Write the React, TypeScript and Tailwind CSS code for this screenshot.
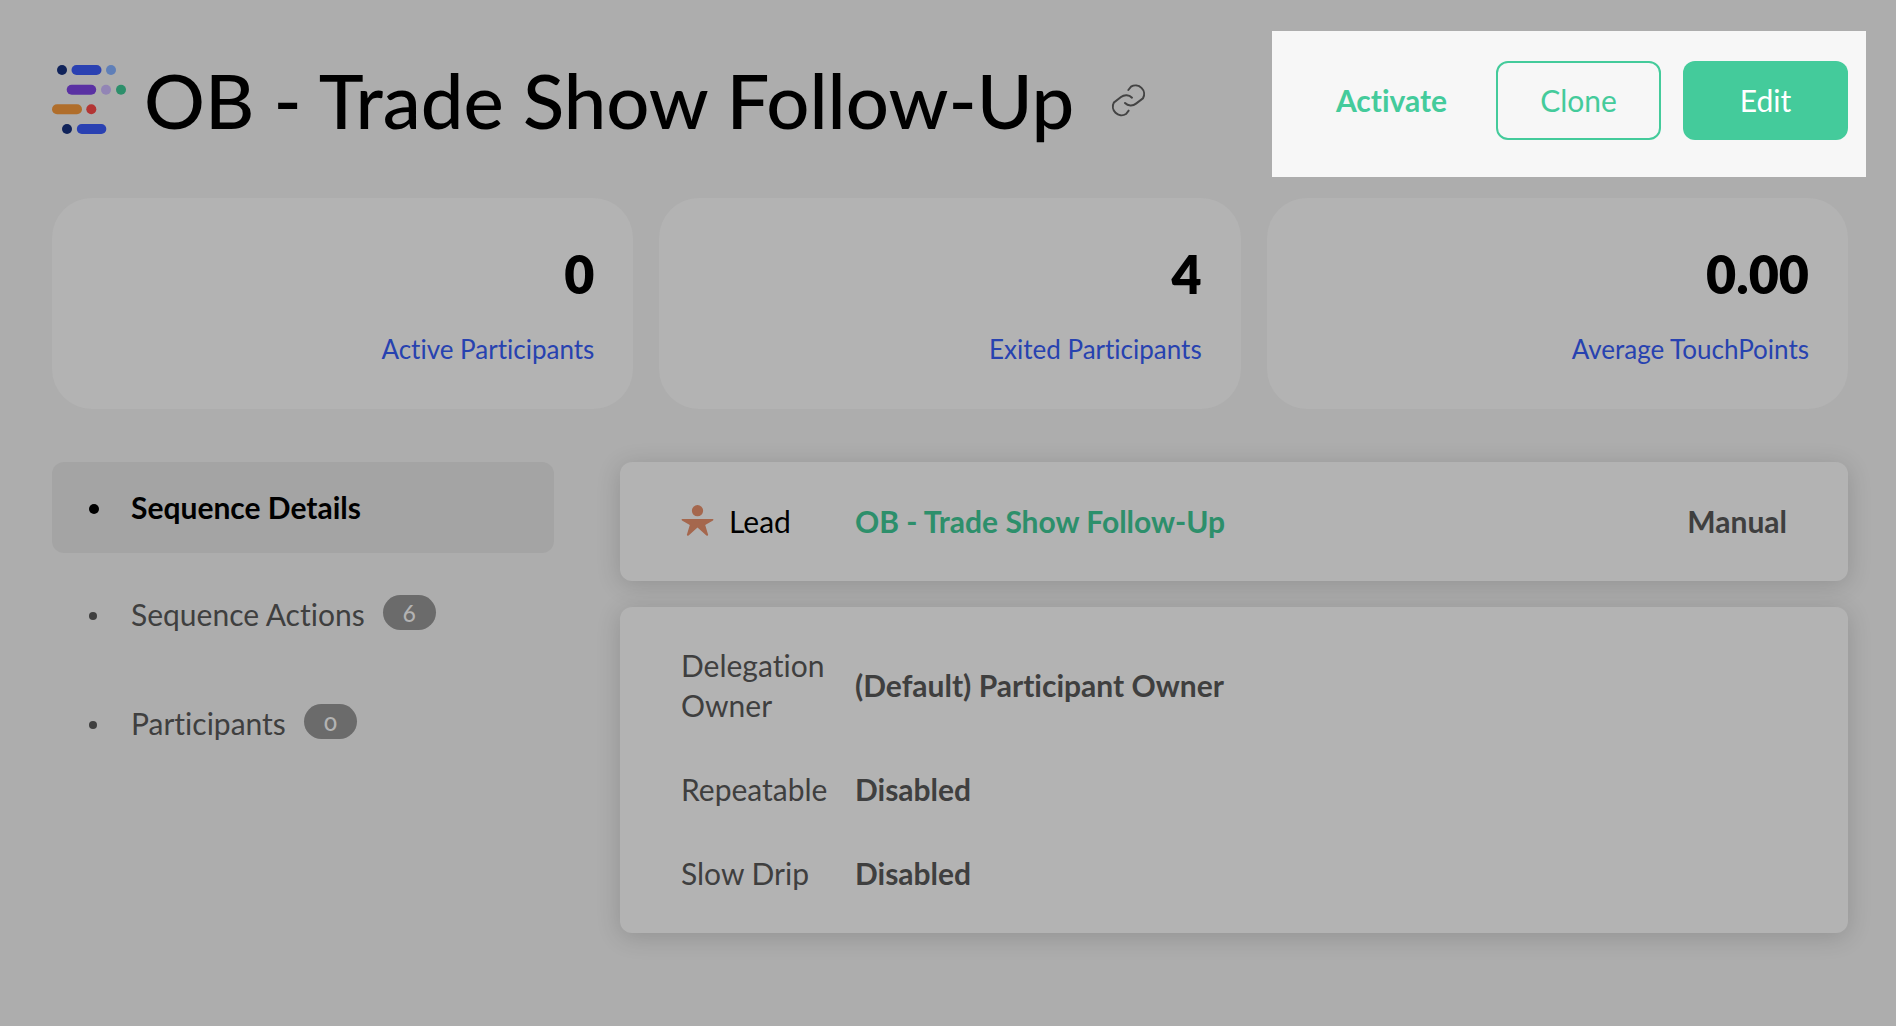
import React from 'react';

const stats = [
  { value: '0', label: 'Active Participants' },
  { value: '4', label: 'Exited Participants' },
  { value: '0.00', label: 'Average TouchPoints' },
];

const navItems = [
  { label: 'Sequence Details', active: true },
  { label: 'Sequence Actions', count: 6 },
  { label: 'Participants', count: 0 },
];

const settings = [
  { label: 'Delegation Owner', value: '(Default) Participant Owner' },
  { label: 'Repeatable', value: 'Disabled' },
  { label: 'Slow Drip', value: 'Disabled' },
];

const SequenceLogo = () => (
  <svg width="74" height="70" viewBox="0 0 74 70" aria-hidden="true">
    <circle cx="10" cy="5" r="5" fill="#10235a" />
    <rect x="19.5" y="0" width="30" height="10" rx="5" fill="#2a41b2" />
    <circle cx="59" cy="5" r="5" fill="#5f7fb8" />
    <rect x="14.7" y="19.7" width="29.5" height="10" rx="5" fill="#5a31a3" />
    <circle cx="54" cy="24.7" r="5" fill="#9285b5" />
    <circle cx="69" cy="24.7" r="5" fill="#2d8f6b" />
    <rect x="0" y="39.3" width="30" height="10" rx="5" fill="#b06e2b" />
    <circle cx="39.3" cy="44.3" r="5" fill="#b33534" />
    <circle cx="15" cy="64" r="5" fill="#10235a" />
    <rect x="24.8" y="59" width="29.5" height="10" rx="5" fill="#2a41b2" />
  </svg>
);

const ChainIcon = () => (
  <svg width="37" height="37" viewBox="212 95 111 111" fill="none" stroke="#434343" strokeWidth="6" strokeLinecap="round" aria-hidden="true">
    <path d="M267 119 L275 109 A26 26 0 0 1 311 144 L290 160 A25 25 0 0 1 257 158" />
    <path d="M268 181 L260 191 A26 26 0 0 1 224 156 L245 140 A25 25 0 0 1 278 142" />
  </svg>
);

const LeadIcon = () => (
  <svg width="33" height="32" viewBox="0 0 33 32" fill="#a5674d" aria-hidden="true">
    <circle cx="16.5" cy="5.7" r="5.6" />
    <path d="M1 14 H32 Q33 14.6 32 15.4 L24.2 20 L27.2 30 Q26.6 31.4 25.4 30.4 L16.5 22.4 L7.6 30.4 Q6.4 31.4 5.8 30 L8.8 20 L1 15.4 Q0 14.6 1 14 Z" />
  </svg>
);

export default function App() {
  return (
    <div className="min-h-screen bg-[#adadad] pl-[52px] pr-12 pb-12 pt-[31px] font-['Lato',sans-serif] text-[30px] leading-10 text-[#3f3f3f] [font-variant-ligatures:no-common-ligatures]">
      <header className="-mr-[18px] flex items-start justify-between">
        <div className="flex items-center pt-[23px]">
          <SequenceLogo />
          <h1 className="ml-[18px] text-[76px] leading-[92px] font-medium text-black">OB - Trade Show Follow-Up</h1>
          <button type="button" aria-label="Copy link" className="ml-9">
            <ChainIcon />
          </button>
        </div>
        <div className="flex gap-[22px] bg-[#f7f7f7] pt-[30px] pr-[18px] pb-[37px] pl-[37px] text-[#44cb9b]">
          <button type="button" className="h-[79px] w-[165px] pb-0.5 font-bold">Activate</button>
          <button type="button" className="h-[79px] w-[165px] rounded-xl border-2 border-[#44cb9b] pb-0.5">Clone</button>
          <button type="button" className="h-[79px] w-[165px] rounded-xl bg-[#44cb9b] pb-0.5 text-white">Edit</button>
        </div>
      </header>

      <section className="mt-[21px] grid grid-cols-3 gap-[26px]">
        {stats.map((stat) => (
          <div key={stat.label} className="rounded-[40px] bg-[#b3b3b3] px-[39px] pt-11 pb-10 text-right">
            <p className="text-[52px] leading-[64px] font-extrabold text-black">{stat.value}</p>
            <p className="mt-[23px] text-[26px] text-[#2742b0]">{stat.label}</p>
          </div>
        ))}
      </section>

      <div className="mt-[53px] flex items-start gap-[66px]">
        <nav className="w-[502px] shrink-0">
          <ul className="flex flex-col gap-[18px]">
            {navItems.map((item) => (
              <li key={item.label}>
                <a
                  href="#"
                  className={`flex h-[91px] items-center rounded-xl pl-9 ${item.active ? 'bg-[#a4a4a4] pb-0.5 font-bold text-black' : 'pb-1.5'}`}
                >
                  <span className="flex w-[43px] pt-1 pl-px">
                    <span className={`rounded-full bg-current ${item.active ? 'size-[10px]' : 'size-2'}`} />
                  </span>
                  {item.label}
                  {item.count !== undefined && (
                    <span className="mb-0.5 ml-[18px] flex h-[35px] w-[53px] items-center justify-center rounded-full bg-[#6b6b6b] text-2xl font-medium oldstyle-nums text-[#b3b3b3]">
                      {item.count}
                    </span>
                  )}
                </a>
              </li>
            ))}
          </ul>
        </nav>

        <main className="flex flex-1 flex-col gap-[26px]">
          <div className="flex h-[119px] items-center rounded-xl bg-[#b3b3b3] px-[61px] pb-0.5 shadow-[0_4px_24px_rgba(0,0,0,0.16)]">
            <div className="flex w-[174px] items-center gap-[15px] text-black">
              <LeadIcon />
              Lead
            </div>
            <a href="#" className="flex-1 font-bold text-[#2d8f6b]">OB - Trade Show Follow-Up</a>
            <span className="font-bold">Manual</span>
          </div>
          <dl className="flex flex-col gap-11 rounded-xl bg-[#b3b3b3] px-[61px] pt-[38px] pb-10 shadow-[0_4px_24px_rgba(0,0,0,0.16)]">
            {settings.map((row) => (
              <div key={row.label} className="flex items-center">
                <dt className="w-[174px] pr-4">{row.label}</dt>
                <dd className="font-bold">{row.value}</dd>
              </div>
            ))}
          </dl>
        </main>
      </div>
    </div>
  );
}
